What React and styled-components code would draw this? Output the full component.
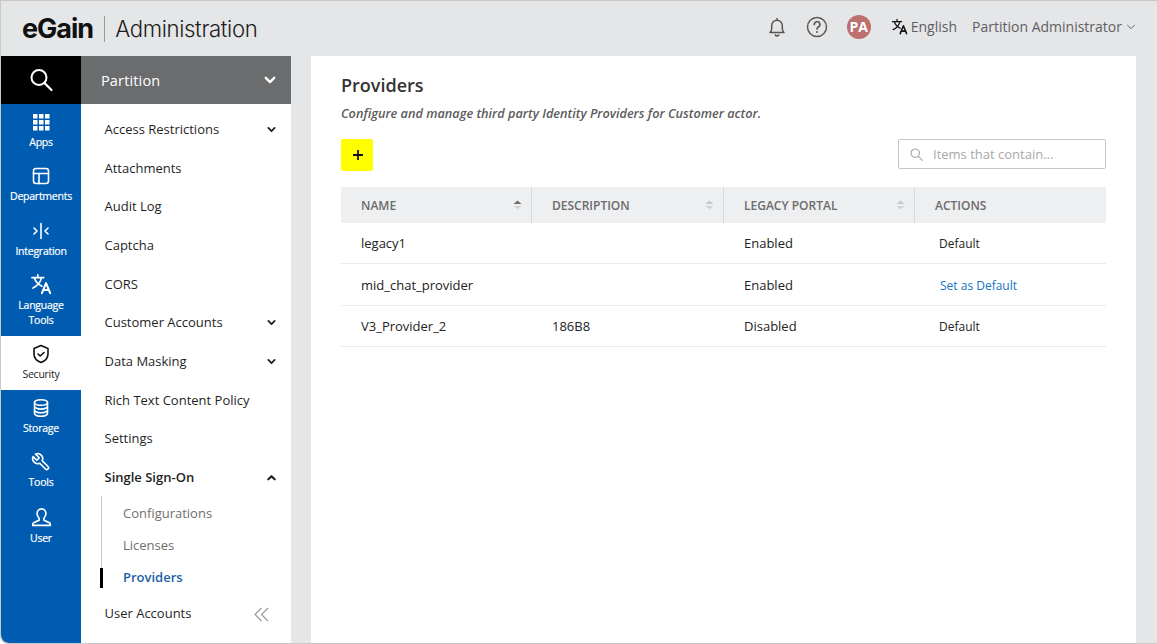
import React from "react";
import styled, { createGlobalStyle } from "styled-components";

const Global = createGlobalStyle`
  html, body { margin: 0; padding: 0; background: #fff; }
  body { font-family: "Open Sans", "Noto Sans", sans-serif; font-size: 13px; color: #222; }
  * { box-sizing: border-box; }
`;
const Frame = styled.div`
  width: 1157px; height: 644px; overflow: hidden; display: flex; flex-direction: column;
  background: #e5e6e8; border-top: 1px solid #c9c9c9; border-left: 1px solid #c9c9c9;
  border-radius: 0 0 0 8px; border-bottom: 1px solid #c9c9c9;
`;
const Header = styled.header`
  height: 55px; flex: none; display: flex; align-items: center; padding: 0 0 0 21px;
`;
const LogoMark = styled.span`
  font-family: "Inter", "Liberation Sans", sans-serif; font-weight: 700; font-size: 27px;
  letter-spacing: -1px; color: #111; line-height: 1; padding-bottom: 1px;
`;
const LogoDivider = styled.span`
  width: 1px; height: 26px; background: #9a9a9a; margin: 0 10px 0 11px;
`;
const LogoTitle = styled.span`
  font-family: "Inter", "Liberation Sans", sans-serif; font-weight: 300; font-size: 22.2px;
  letter-spacing: -0.35px; color: #1d1d1d; line-height: 1; padding-top: 2px;
`;
const HeaderRight = styled.div`
  margin-left: auto; display: flex; align-items: center; color: #5f6063; font-size: 14px; padding: 0 21px 4px 0;
`;
const HeaderIcon = styled.svg`
  display: block; flex: none; margin-right: ${(p) => p.$mr}px;
`;
const HeaderGlyph = styled.span`
  display: flex; flex: none; margin-right: 3px;
`;
const Avatar = styled.span`
  width: 24px; height: 24px; border-radius: 50%; background: #bc7070; color: #fff; font-weight: 700;
  font-size: 14px; display: flex; align-items: center; justify-content: center; margin-right: 20px;
`;
const HeaderText = styled.span`
  margin-right: ${(p) => p.$mr}px; white-space: nowrap;
`;
const Body = styled.div`
  flex: 1; display: flex; min-height: 0;
`;
const Rail = styled.nav`
  width: 80px; flex: none; background: #005cb0; display: flex; flex-direction: column;
  border-bottom-left-radius: 8px; overflow: hidden;
`;
const SearchTile = styled.div`
  height: 48px; background: #000; display: flex; align-items: center; justify-content: center; color: #fff;
`;
const RailItem = styled.div`
  height: ${(p) => p.$h || 54}px; display: flex; flex-direction: column; align-items: center;
  padding-top: ${(p) => p.$pt || 8}px; color: ${(p) => (p.$active ? "#222" : "#fff")}; background: ${(p) => (p.$active ? "#fff" : "transparent")};
  font-size: 10.5px; line-height: 15px; letter-spacing: -0.25px; text-align: center;
  -webkit-text-stroke: ${(p) => (p.$active ? "0" : "0.2px")};
  svg { display: block; margin-bottom: 3px; flex: none; }
`;
const Panel = styled.aside`
  width: 210px; flex: none; background: #fff; display: flex; flex-direction: column; margin-right: 20px;
`;
const PanelHead = styled.div`
  height: 48px; flex: none; background: #6a6c6d; color: #fff; font-size: 14.5px; display: flex; align-items: center;
  justify-content: space-between; padding: 0 15px 0 20px; letter-spacing: 0.15px;
`;
const MenuList = styled.div`
  padding-top: 5.8px; display: flex; flex-direction: column;
`;
const MenuRow = styled.div`
  height: 38.67px; flex: none; display: flex; align-items: center; justify-content: space-between; padding: 0 15px 0 23.5px;
  font-size: 13px; color: #1f1f1f; font-weight: ${(p) => (p.$bold ? 600 : 400)};
`;
const SubList = styled.div`
  margin: 0 0 0 20px; padding-top: 1px; border-left: 1px solid #c9c9c9; height: 84px; flex: none; display: flex; flex-direction: column;
`;
const SubRow = styled.div`
  height: 32px; flex: none; display: flex; align-items: center; padding-left: 21px; font-size: 13px; position: relative;
  color: ${(p) => (p.$active ? "#1d5ea8" : "#6e6e6e")}; font-weight: ${(p) => (p.$active ? 600 : 400)};
  ${(p) => p.$active && `&::before { content: ""; position: absolute; left: -2px; top: 7px; width: 3px; height: 20px; background: #000; }`}
`;
const LastRow = styled(MenuRow)`
  margin-top: 13.2px; padding-right: 22px;
  svg { margin-top: 4px; }
`;
const Content = styled.main`
  width: 825px; flex: none; background: #fff; padding: 16px 30px 0;
`;
const Title = styled.h1`
  margin: 0; font-size: 18px; line-height: 26px; font-weight: 600; color: #333;
`;
const Subtitle = styled.p`
  margin: 6px 0 0; font-size: 12.7px; line-height: 18px; font-style: italic; font-weight: 600; color: #5b5b5b;
`;
const Toolbar = styled.div`
  margin-top: 17px; height: 32px; display: flex; align-items: flex-start; justify-content: space-between;
`;
const AddButton = styled.div`
  width: 32px; height: 32px; background: #ffff00; border-radius: 2px; display: flex; align-items: center; justify-content: center; padding-left: 1px;
`;
const SearchBox = styled.div`
  width: 208px; height: 30px; border: 1px solid #c6c6c6; border-radius: 2px; display: flex; align-items: center;
  padding-left: 11px; gap: 10px; color: #a8a8a8; font-size: 13px;
`;
const Table = styled.div`
  margin-top: 16px; width: 765px;
`;
const HeadRow = styled.div`
  height: 36px; background: #eeeff1; display: grid; grid-template-columns: 191px 192px 191px 191px;
`;
const HeadCell = styled.div`
  display: flex; align-items: center; justify-content: space-between; padding: 0 ${(p) => (p.$last ? 0 : "9px")} 0 20px;
  font-size: 12px; font-weight: 600; color: #6b6b6b; border-right: ${(p) => (p.$last ? "none" : "1px solid #d6d7d9")};
`;
const Row = styled.div`
  height: ${(p) => p.$h}px; display: grid; grid-template-columns: 191px 192px 191px 191px; align-items: center;
  border-bottom: 1px solid #ebebeb; font-size: 13px; color: #222;
`;
const Cell = styled.div`
  padding-left: ${(p) => p.$pl || 20}px; font-size: ${(p) => p.$fs || 13}px;
`;
const ActionLink = styled.a`
  color: #1473c2; font-size: 12px;
`;

const Chevron = ({ up, size = 10, sw = 2, color = "#222" }) => (
  <svg width={size} height={size} viewBox="0 0 10 10" fill="none" stroke={color} strokeWidth={sw} strokeLinecap="round" strokeLinejoin="round">
    <path d={up ? "M1.5 7 5 3.5 8.5 7" : "M1.5 3.2 5 6.7 8.5 3.2"} />
  </svg>
);
const Sort = ({ up }) => (
  <svg width="9" height="10" viewBox="0 0 9 10">
    <path d="M4.5 0.5 8.5 4H.5z" fill={up ? "#6b6b6b" : "#c6c7c9"} />
    <path d="M4.5 9.5 8.5 6H.5z" fill="#d2d3d5" />
  </svg>
);
const Translate = ({ size, color }) => (
  <svg width={size} height={size} viewBox="0 0 24 24" fill="none" stroke={color} strokeWidth="1.8" strokeLinecap="round" strokeLinejoin="round">
    <path d="M2 5h13M8.5 2v3M12.5 5c-.8 4.5-4.500 9-9.500 11.500M4.500 5c1.300 4 4.500 7.500 8.500 9.500" />
    <path d="m13 22 4.500-11L22 22M14.500 18.500h6" strokeWidth="2.200" />
  </svg>
);

const white = { fill: "none", stroke: "#fff", strokeWidth: 1.6, strokeLinecap: "round", strokeLinejoin: "round" };
const AppsIcon = () => (
  <svg width="20" height="20" viewBox="0 0 20 20" fill="#fff">
    {[2, 8, 14].flatMap((x) => [2, 8, 14].map((y) => <rect key={`${x}-${y}`} x={x} y={y} width="4.500" height="4.500" />))}
  </svg>
);
const DeptIcon = () => (
  <svg width="20" height="20" viewBox="0 0 20 20" {...white}>
    <rect x="2.500" y="2.500" width="15" height="15" rx="2.500" /><path d="M2.500 7.500h15M8 7.500v10" />
  </svg>
);
const IntegrationIcon = () => (
  <svg width="20" height="20" viewBox="0 0 20 20" {...white}>
    <path d="M10 2.500v15M3 7l3 3-3 3M17 7l-3 3 3 3" />
  </svg>
);
const ShieldIcon = () => (
  <svg width="20" height="20" viewBox="0 0 20 20" fill="none" stroke="#111" strokeWidth="1.600" strokeLinecap="round" strokeLinejoin="round">
    <path d="M10 1.500 17 4.500V10c0 4-3 7-7 8.500C6 17 3 14 3 10V4.500z" /><path d="m7 10 2.200 2L13 8.500" />
  </svg>
);
const StorageIcon = () => (
  <svg width="20" height="20" viewBox="0 0 20 20" {...white}>
    <ellipse cx="10" cy="4.500" rx="6.500" ry="2.800" /><path d="M3.500 4.500v11c0 1.500 3 2.800 6.500 2.800s6.500-1.300 6.500-2.800v-11M3.500 8.300c0 1.500 3 2.800 6.500 2.800s6.500-1.300 6.500-2.800M3.500 12c0 1.500 3 2.800 6.500 2.800s6.500-1.300 6.500-2.800" />
  </svg>
);
const ToolsIcon = () => (
  <svg width="20" height="20" viewBox="0 0 24 24" {...white} strokeWidth="2">
    <g transform="translate(24 0) scale(-1 1)">
      <path d="M14.700 6.300a1 1 0 0 0 0 1.400l1.600 1.600a1 1 0 0 0 1.400 0l3.770-3.770a6 6 0 0 1-7.940 7.940l-6.910 6.910a2.120 2.120 0 0 1-3-3l6.910-6.910a6 6 0 0 1 7.940-7.940l-3.760 3.760z" />
    </g>
  </svg>
);
const UserIcon = () => (
  <svg width="21" height="21" viewBox="0 0 20 20" {...white}>
    <path d="M10 1.800c2.600 0 4.200 2 4.200 4.500 0 2-1 3.600-2 4.500v1.700l5.300 2.500c.6.300.8.700.8 1.300v1.200H1.700v-1.200c0-.6.300-1 .8-1.300l5.300-2.500v-1.700c-1-.9-2-2.500-2-4.500 0-2.500 1.600-4.500 4.200-4.500z" />
  </svg>
);

const menuTop = [
  ["Access Restrictions", true], ["Attachments"], ["Audit Log"], ["Captcha"], ["CORS"],
  ["Customer Accounts", true], ["Data Masking", true], ["Rich Text Content Policy"], ["Settings"],
];

export default function App() {
  return (
    <Frame>
      <Global />
      <Header>
        <LogoMark>eGain</LogoMark>
        <LogoDivider />
        <LogoTitle>Administration</LogoTitle>
        <HeaderRight>
          <HeaderIcon $mr={19} width="20" height="20" viewBox="0 0 20 20" fill="none" stroke="#555" strokeWidth="1.500" strokeLinecap="round" strokeLinejoin="round">
            <path d="M3 15.500c1.200-1 1.700-2 1.700-4V8.500a5.300 5.300 0 0 1 10.600 0v3c0 2 .5 3 1.700 4zM8.300 18a2 2 0 0 0 3.400 0M10 1.500v1.700" />
          </HeaderIcon>
          <HeaderIcon $mr={19} width="22" height="22" viewBox="0 0 22 22" fill="none" stroke="#5a5a5a" strokeWidth="1.500" strokeLinecap="round" strokeLinejoin="round">
            <circle cx="11" cy="11" r="9.500" /><path d="M8.300 8.500a2.800 2.800 0 1 1 4.200 2.400c-1 .6-1.500 1-1.500 2.100" strokeWidth="1.700" /><path d="M11 16v.1" strokeWidth="2" />
          </HeaderIcon>
          <Avatar>PA</Avatar>
          <HeaderGlyph><Translate size={17} color="#111" /></HeaderGlyph>
          <HeaderText $mr={15}>English</HeaderText>
          <HeaderText $mr={4}>Partition Administrator</HeaderText>
          <Chevron size={10} sw={1} color="#666" />
        </HeaderRight>
      </Header>
      <Body>
        <Rail>
          <SearchTile>
            <svg width="26" height="26" viewBox="0 0 26 26" fill="none" stroke="#fff" strokeLinecap="round">
              <circle cx="11" cy="10.500" r="7.500" strokeWidth="2" /><path d="m16.500 16 7 7" strokeWidth="2.200" />
            </svg>
          </SearchTile>
          <RailItem><AppsIcon />Apps</RailItem>
          <RailItem $h={55}><DeptIcon />Departments</RailItem>
          <RailItem><IntegrationIcon />Integration</RailItem>
          <RailItem $h={69} $pt={6}><Translate size={22} color="#fff" />Language<br />Tools</RailItem>
          <RailItem $active><ShieldIcon />Security</RailItem>
          <RailItem><StorageIcon />Storage</RailItem>
          <RailItem><ToolsIcon />Tools</RailItem>
          <RailItem $h={55} $pt={9}><UserIcon />User</RailItem>
        </Rail>
        <Panel>
          <PanelHead>Partition<Chevron size={12} sw={2} color="#fff" /></PanelHead>
          <MenuList>
            {menuTop.map(([label, hasChildren]) => (
              <MenuRow key={label}>{label}{hasChildren && <Chevron size={9} />}</MenuRow>
            ))}
            <MenuRow $bold>Single Sign-On<Chevron up size={9} sw={2.400} /></MenuRow>
            <SubList>
              <SubRow>Configurations</SubRow>
              <SubRow>Licenses</SubRow>
              <SubRow $active>Providers</SubRow>
            </SubList>
            <LastRow>
              User Accounts
              <svg width="15" height="15" viewBox="0 0 15 15" fill="none" stroke="#9a9a9a" strokeWidth="1.200">
                <path d="M7.500 1 1 7.500 7.500 14M14 1 7.500 7.500 14 14" />
              </svg>
            </LastRow>
          </MenuList>
        </Panel>
        <Content>
          <Title>Providers</Title>
          <Subtitle>Configure and manage third party Identity Providers for Customer actor.</Subtitle>
          <Toolbar>
            <AddButton>
              <svg width="10" height="10" viewBox="0 0 10 10" stroke="#111" strokeWidth="1.800"><path d="M5 0v10M0 5h10" /></svg>
            </AddButton>
            <SearchBox>
              <svg width="13" height="13" viewBox="0 0 13 13" fill="none" stroke="#aaa" strokeWidth="1.200" strokeLinecap="round">
                <circle cx="5.200" cy="5.200" r="4.200" /><path d="m8.400 8.400 4 4" />
              </svg>
              Items that contain...
            </SearchBox>
          </Toolbar>
          <Table>
            <HeadRow>
              <HeadCell>NAME<Sort up /></HeadCell>
              <HeadCell>DESCRIPTION<Sort /></HeadCell>
              <HeadCell>LEGACY PORTAL<Sort /></HeadCell>
              <HeadCell $last>ACTIONS</HeadCell>
            </HeadRow>
            <Row $h={41}><Cell>legacy1</Cell><Cell /><Cell>Enabled</Cell><Cell $pl={24} $fs={12}>Default</Cell></Row>
            <Row $h={42}><Cell>mid_chat_provider</Cell><Cell /><Cell>Enabled</Cell><Cell $pl={25}><ActionLink>Set as Default</ActionLink></Cell></Row>
            <Row $h={41}><Cell>V3_Provider_2</Cell><Cell>186B8</Cell><Cell>Disabled</Cell><Cell $pl={24} $fs={12}>Default</Cell></Row>
          </Table>
        </Content>
      </Body>
    </Frame>
  );
}
